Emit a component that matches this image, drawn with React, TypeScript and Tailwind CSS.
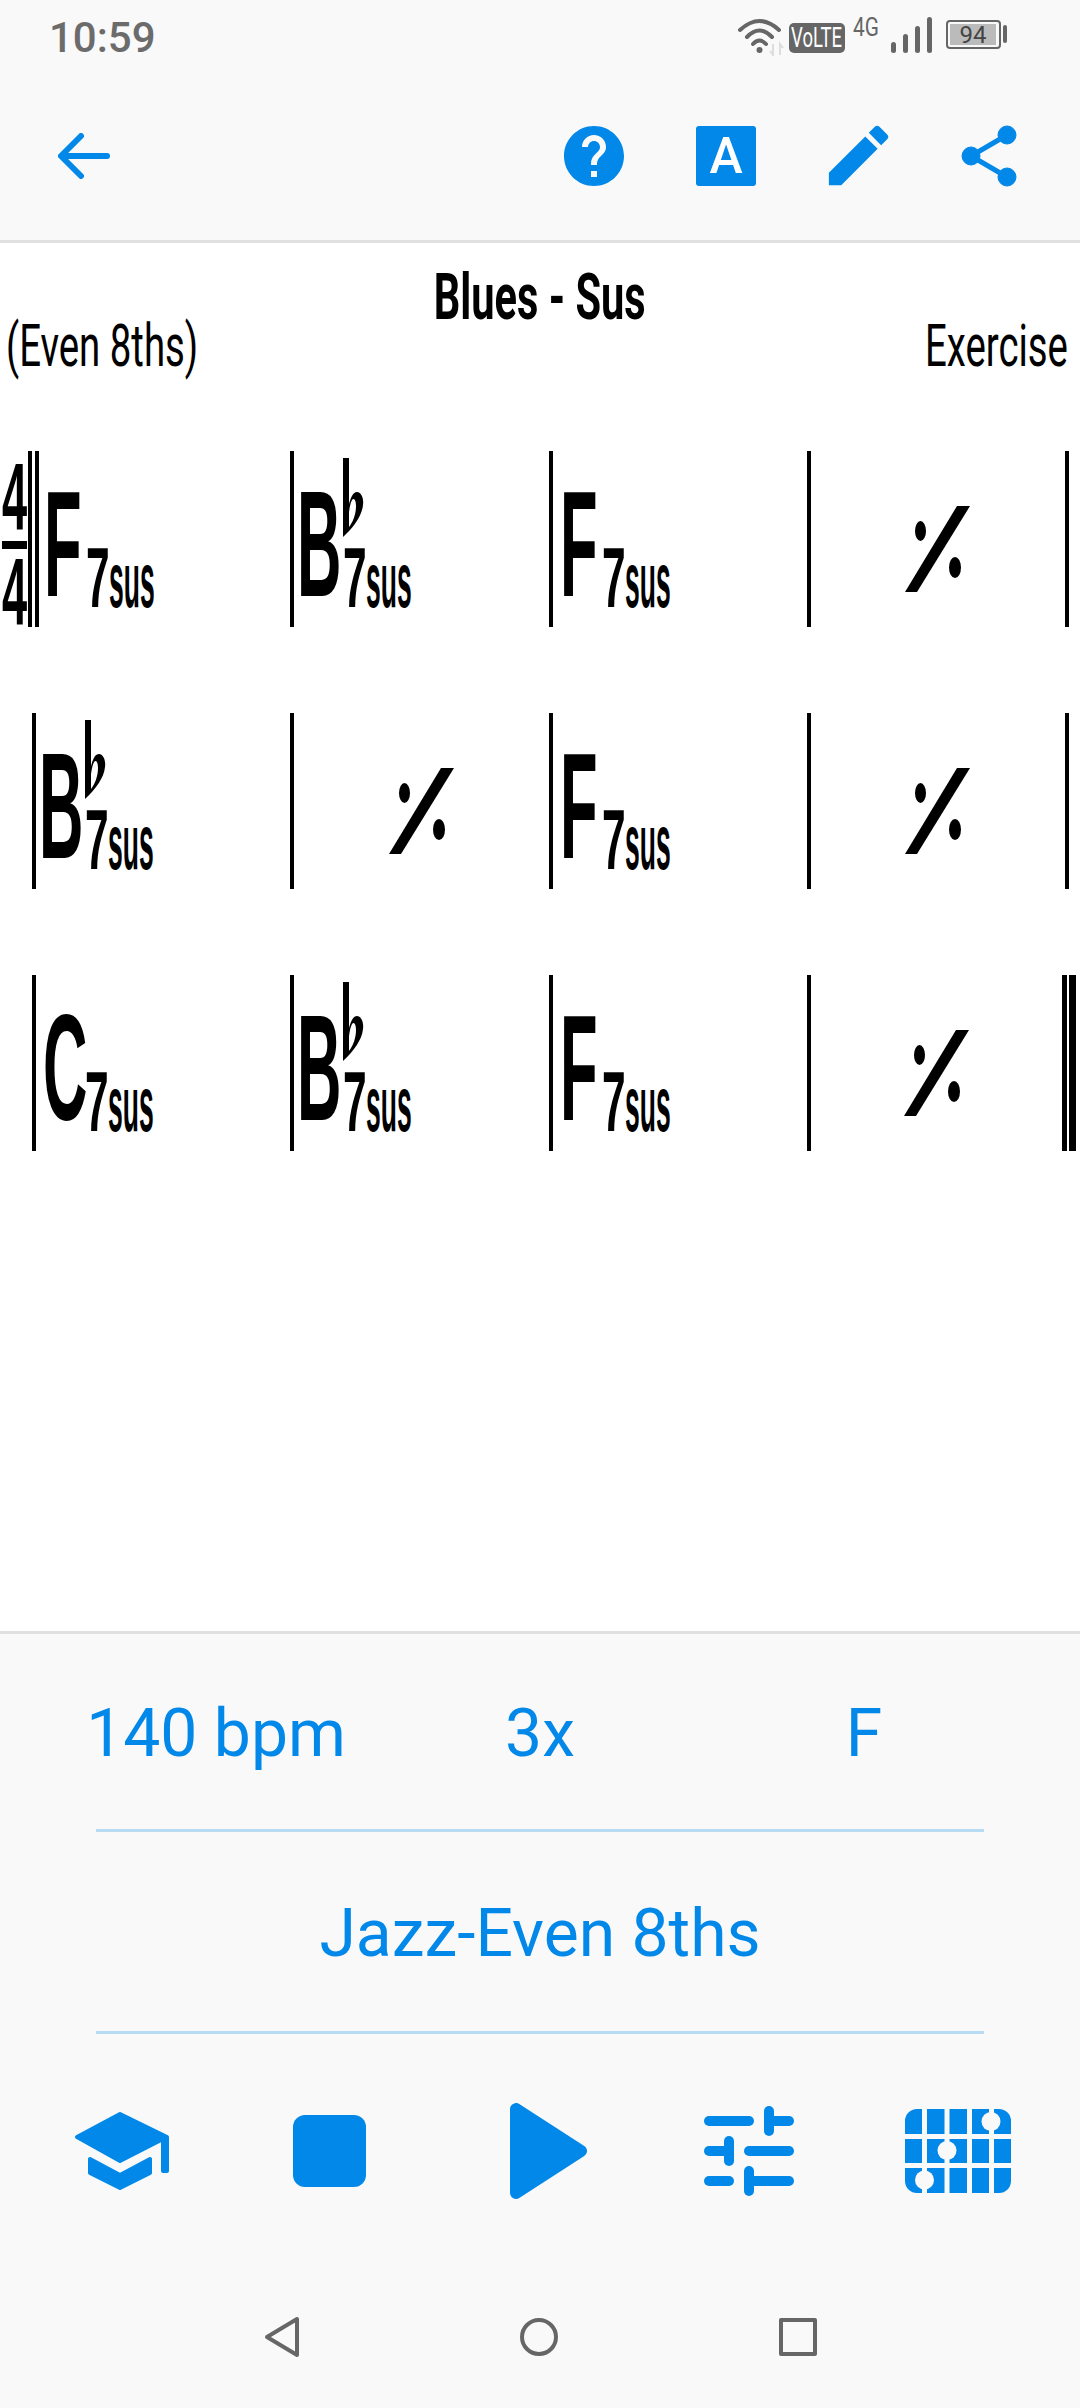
import React from "react";
import { MdEdit, MdHelp } from "react-icons/md";

const Flat = () => (
  <svg
    className="absolute left-[42px] top-[7px]"
    width="21"
    height="79"
    viewBox="0 0 21 79"
  >
    <path
      d="M0 0H6V46C8 39 10 34 14 34C18 34 21 40 20 47C19 58 10 70 0 79ZM6 54V69C10 64 13 56 13 48C13 44 12 41 10.5 41C8.5 41 7 47 6 54Z"
      fill="#000"
      fillRule="evenodd"
    />
  </svg>
);

const RepeatSign = () => (
  <svg width="65" height="86" viewBox="0 0 65 86">
    <polygon points="0,86 12,86 65,0 52,0" fill="#000" />
    <ellipse cx="15.5" cy="25" rx="5.5" ry="10" fill="#000" />
    <ellipse cx="50" cy="61.5" rx="6" ry="10.5" fill="#000" />
  </svg>
);

// chord: big root letter, optional flat, then the 7sus suffix
const Chord = ({ root }: { root: "F" | "B" | "C" }) => {
  const isFlat = root === "B";
  return (
    <div className="relative flex items-start font-['Liberation_Sans',sans-serif] font-bold text-black">
      <div className="w-[42px]">
        <div
          className={
            isFlat
              ? "-ml-[4px] text-[150px] leading-none mt-[18px] origin-left scale-x-[0.41]"
              : "text-[150px] leading-none mt-[18px] origin-left scale-x-[0.41]"
          }
        >
          {root}
        </div>
      </div>
      {isFlat && <Flat />}
      <div className="w-[23px] text-[85px] leading-none mt-[84px] origin-left scale-x-[0.5]">
        7
      </div>
      <div className="text-[78px] leading-none mt-[90px] origin-left scale-x-[0.34]">
        sus
      </div>
    </div>
  );
};

const Cell = ({
  chord,
  first,
}: {
  chord?: "F" | "B" | "C";
  first?: boolean;
}) => {
  if (!chord) {
    return (
      <div className="w-[258.25px] h-[176px] flex-none border-l-4 border-black flex items-center justify-center pt-[20px]">
        <RepeatSign />
      </div>
    );
  }
  return (
    <div
      className={
        first
          ? "w-[251.25px] h-[176px] flex-none pl-[5px]"
          : "w-[258.25px] h-[176px] flex-none border-l-4 border-black pl-[7px]"
      }
    >
      <Chord root={chord} />
    </div>
  );
};

const TimeSignature = () => (
  <div className="w-[28px] h-[176px] flex-none flex flex-col items-start pl-[2px] font-['Liberation_Sans',sans-serif] font-bold text-black">
    <div className="text-[94px] leading-[70px] h-[80px] pt-[11px] origin-left scale-x-[0.48]">
      4
    </div>
    <div className="w-[25px] h-[8px] mt-[10px] bg-black" />
    <div className="text-[94px] leading-[70px] mt-[8px] origin-left scale-x-[0.48]">
      4
    </div>
  </div>
);

const Bar = () => <div className="w-[4px] h-[176px] flex-none bg-black" />;

const SchoolIcon = () => (
  <svg
    width="96"
    height="80"
    viewBox="0 0 96 80"
    fill="#0288e9"
    stroke="#0288e9"
    strokeWidth="4"
    strokeLinejoin="round"
  >
    <polygon points="46,3 3,26 46,50 89,28 89,60 93,60 93,26" />
    <polygon points="16,48 46,64 76,48 76,62 46,77 16,62" />
  </svg>
);

const GridIcon = () => (
  <svg width="106" height="84" viewBox="0 0 106 84">
    <rect width="106" height="84" rx="12" fill="#0288e9" />
    <g fill="#f9f9f9">
      <rect x="17" y="0" width="5" height="84" />
      <rect x="39.5" y="0" width="5" height="84" />
      <rect x="62" y="0" width="5" height="84" />
      <rect x="84" y="0" width="5" height="84" />
      <rect x="0" y="25" width="106" height="5" />
      <rect x="0" y="54" width="106" height="5" />
      <circle cx="86" cy="12.5" r="9.5" />
      <circle cx="42" cy="41.5" r="9.5" />
      <circle cx="19.5" cy="71" r="9.5" />
    </g>
  </svg>
);

const TuneIcon = () => (
  <svg width="120" height="120" viewBox="0 0 24 24" fill="#0288e9">
    <rect x="3" y="5" width="10" height="2" rx="1" />
    <rect x="15" y="3" width="2" height="6" rx="1" />
    <rect x="16" y="5" width="5" height="2" rx="1" />
    <rect x="3" y="11" width="5" height="2" rx="1" />
    <rect x="7" y="9" width="2" height="6" rx="1" />
    <rect x="11" y="11" width="10" height="2" rx="1" />
    <rect x="3" y="17" width="6" height="2" rx="1" />
    <rect x="11" y="15" width="2" height="6" rx="1" />
    <rect x="12" y="17" width="9" height="2" rx="1" />
  </svg>
);

export default function App() {
  return (
    <div className="w-[1080px] h-[2408px] flex flex-col bg-white font-['Roboto',sans-serif] overflow-hidden">
      {/* status bar + toolbar */}
      <div className="bg-[#f9f9f9] border-b-[3px] border-[#e0e0e0] flex-none">
        <div className="h-[74px] flex items-start pl-[49px] pr-[73px]">
          <div className="text-[42px] font-medium leading-none mt-[17px] text-[#6b6b6b]">
            10:59
          </div>
          <div className="ml-auto flex items-start">
            <svg
              className="mt-[18px]"
              width="47"
              height="38"
              viewBox="0 0 47 38"
              fill="none"
            >
              <path
                d="M2 12Q21.5 -6 41 12M9 19Q21.5 6 34 19M15 26Q21.5 19 28 26"
                stroke="#666"
                strokeWidth="4"
                strokeLinecap="round"
              />
              <circle cx="21.5" cy="32" r="3" fill="#666" />
              <path
                d="M35 26v11l-3-4M42 37V26l3 4"
                stroke="#ddd"
                strokeWidth="2"
              />
            </svg>
            <div className="ml-[4px] mt-[23px] w-[56px] h-[30px] rounded-[5px] bg-[#666] flex items-center justify-center">
              <div className="text-[28px] leading-none text-white scale-x-[0.66] whitespace-nowrap">
                VoLTE
              </div>
            </div>
            <div className="ml-[8px] mt-[14px] w-[26px] text-[26px] leading-none text-[#666] origin-left scale-x-[0.8]">
              4G
            </div>
            <div className="ml-[12px] mt-[17px] h-[36px] flex items-end gap-[7px]">
              <div className="w-[5px] h-[11px] rounded-full bg-[#666]" />
              <div className="w-[5px] h-[19px] rounded-full bg-[#666]" />
              <div className="w-[5px] h-[27px] rounded-full bg-[#666]" />
              <div className="w-[5px] h-[36px] rounded-full bg-[#666]" />
            </div>
            <div className="ml-[14px] mt-[20px] w-[55px] h-[29px] rounded-[4px] border-2 border-[#666] p-[2px]">
              <div className="h-full w-[46px] bg-[#bbb] flex items-center justify-center text-[24px] leading-none text-[#444]">
                94
              </div>
            </div>
            <div className="ml-[2px] mt-[25px] w-[4px] h-[18px] rounded-[2px] bg-[#666]" />
          </div>
        </div>
        <div className="h-[166px] flex items-center pl-[58px] pr-[24px] pb-[3px]">
          <svg
            width="52"
            height="46"
            viewBox="0 0 52 46"
            fill="none"
            stroke="#0288e9"
            strokeWidth="6"
            strokeLinecap="round"
            strokeLinejoin="round"
          >
            <path d="M49 23H4M23 3L3 23l20 20" />
          </svg>
          <div className="ml-auto flex items-center text-[#0288e9]">
            <div className="w-[132px] flex justify-center">
              <MdHelp size={72} />
            </div>
            <div className="w-[132px] flex justify-center">
              <div className="w-[60px] h-[60px] rounded-[3px] bg-[#0288e9] flex items-center justify-center text-[50px] font-medium leading-none text-white">
                A
              </div>
            </div>
            <div className="w-[132px] flex justify-center">
              <MdEdit size={79} />
            </div>
            <div className="w-[132px] flex justify-center">
              <svg
                width="58"
                height="62"
                viewBox="0 0 58 62"
                fill="#0288e9"
                stroke="#0288e9"
              >
                <circle cx="46" cy="10" r="9" />
                <circle cx="10" cy="31" r="9" />
                <circle cx="46" cy="52" r="9" />
                <path d="M46 10L10 31l36 21" fill="none" strokeWidth="5" />
              </svg>
            </div>
          </div>
        </div>
      </div>

      {/* chord chart */}
      <div className="flex-1 bg-white text-black pt-[22px]">
        <div className="h-[51px] flex justify-center">
          <div className="text-[65px] leading-none font-bold whitespace-nowrap scale-x-[0.64]">
            Blues - Sus
          </div>
        </div>
        <div className="flex justify-between pl-[6px] pr-[12px]">
          <div className="text-[59px] leading-none whitespace-nowrap origin-left scale-x-[0.65]">
            (Even 8ths)
          </div>
          <div className="text-[59px] leading-none whitespace-nowrap origin-right scale-x-[0.65]">
            Exercise
          </div>
        </div>
        <div className="mt-[76px] flex flex-col gap-[86px]">
          <div className="flex">
            <TimeSignature />
            <Bar />
            <div className="w-[3px] flex-none" />
            <Bar />
            <Cell chord="F" first />
            <Cell chord="B" />
            <Cell chord="F" />
            <Cell />
            <Bar />
          </div>
          <div className="flex pl-[32px]">
            <Cell chord="B" />
            <Cell />
            <Cell chord="F" />
            <Cell />
            <Bar />
          </div>
          <div className="flex pl-[32px]">
            <Cell chord="C" />
            <Cell chord="B" />
            <Cell chord="F" />
            <div className="w-[255.5px] h-[176px] flex-none border-l-4 border-black flex items-center justify-center pt-[20px]">
              <RepeatSign />
            </div>
            <div className="w-[14px] h-[176px] flex-none flex gap-[2px]">
              <div className="w-[5px] h-full bg-black" />
              <div className="w-[7px] h-full bg-black" />
            </div>
          </div>
        </div>
      </div>

      {/* tempo, repeats, key, style, transport */}
      <div className="flex-none bg-[#f9f9f9] border-t-[3px] border-[#e0e0e0] text-[#0288e9]">
        <div className="h-[195px] grid grid-cols-3 items-center px-[54px] pt-[5px] text-center text-[66px] leading-none">
          <div>140 bpm</div>
          <div>3x</div>
          <div>F</div>
        </div>
        <div className="mx-[96px] h-[3px] bg-[#b9dcf5]" />
        <div className="h-[199px] flex items-center justify-center pt-[5px] text-[66px] leading-none">
          Jazz-Even 8ths
        </div>
        <div className="mx-[96px] h-[3px] bg-[#b9dcf5]" />
        <div className="h-[233px] flex items-center">
          <div className="ml-[74px]">
            <SchoolIcon />
          </div>
          <div className="ml-[123px] w-[73px] h-[72px] rounded-[12px] bg-[#0288e9]" />
          <svg
            className="ml-[144px]"
            width="77"
            height="96"
            viewBox="0 0 77 96"
            fill="#0288e9"
            stroke="#0288e9"
            strokeWidth="12"
            strokeLinejoin="round"
          >
            <polygon points="6,6 6,90 71,48" />
          </svg>
          <div className="ml-[102px]">
            <TuneIcon />
          </div>
          <div className="ml-[96px]">
            <GridIcon />
          </div>
        </div>
        {/* android nav bar */}
        <div className="h-[141px] flex items-center pb-[2px]">
          <svg
            className="ml-[264px]"
            width="36"
            height="42"
            viewBox="0 0 36 42"
            fill="none"
            stroke="#666"
            strokeWidth="4"
            strokeLinejoin="round"
          >
            <polygon points="33,3 33,39 3,21" />
          </svg>
          <svg
            className="ml-[220px]"
            width="38"
            height="38"
            viewBox="0 0 38 38"
            fill="none"
            stroke="#666"
            strokeWidth="4"
          >
            <circle cx="19" cy="19" r="17" />
          </svg>
          <div className="ml-[221px] w-[38px] h-[38px] rounded-[2px] border-4 border-[#666]" />
        </div>
      </div>
    </div>
  );
}
